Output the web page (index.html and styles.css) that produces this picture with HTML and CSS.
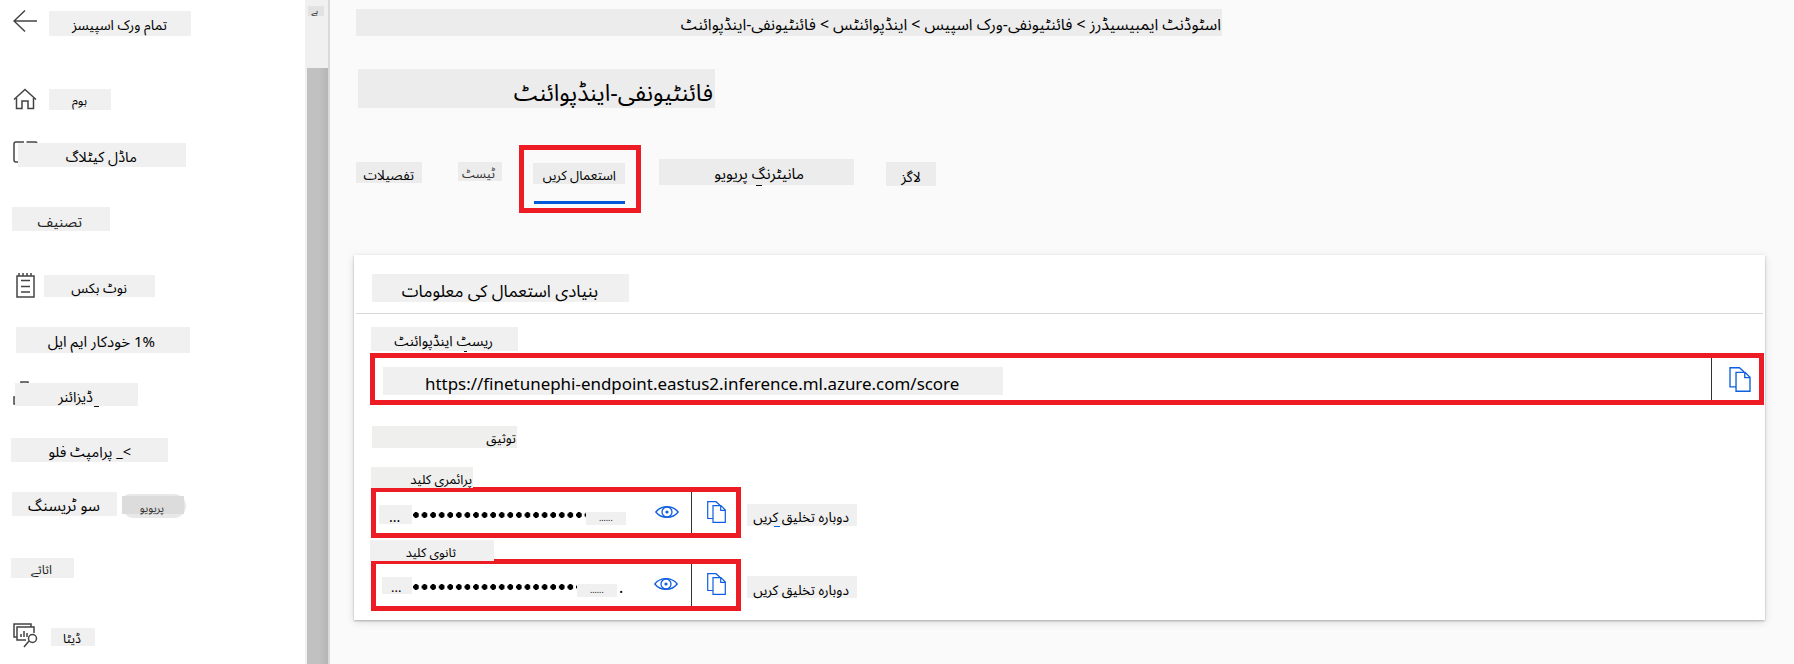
FILE: index.html
```
<!DOCTYPE html>
<html lang="ur">
<head>
<meta charset="utf-8">
<title>فائنٹیونفی-اینڈپوائنٹ</title>
<link rel="stylesheet" href="styles.css">
</head>
<body>
<svg width="0" height="0" class="defs" aria-hidden="true">
  <symbol id="copy" viewBox="0 0 19 22"><path d="M5.500 17.500H.7V.7h8.300l4 3.500M6 4.700h8l4.300 4.300v12.300H6zM13.700 4.700v4.600h4.600" fill="none" stroke="#0f5fe0" stroke-width="1.200"/></symbol>
  <symbol id="eye" viewBox="0 0 24 12"><path d="M.8 6Q5 .7 12 .7T23.200 6Q19 11.300 12 11.300T.8 6z" fill="none" stroke="#0f5fe0" stroke-width="1.300"/><circle cx="12" cy="6" r="5" fill="none" stroke="#0f5fe0" stroke-width="1.300"/><circle cx="12" cy="6" r="1.600" fill="#0f5fe0"/></symbol>
</svg>
<div class="app">
  <nav class="sidebar">
    <div class="item all"><svg class="icon" width="25" height="24" viewBox="0 0 25 24"><path d="M24 12H1M12 1.500L1 12l11 10.500"/></svg><span class="chip"><span>تمام ورک اسپیسز</span></span></div>
    <div class="item home"><svg class="icon" width="24" height="22" viewBox="0 0 24 22"><path d="M1 11.500L12 1.500 23 11.500M3.500 10v10.500h5.500v-7.500h6v7.500H20.500V10"/></svg><span class="chip"><span>ہوم</span></span></div>
    <div class="item models"><svg class="icon" width="26" height="22" viewBox="0 0 26 22"><path d="M11 1H3Q1 1 1 3v16q0 2 2 2h3M13.500 1H22q1.500 0 2 1"/></svg><span class="chip"><span>ماڈل کیٹلاگ</span></span></div>
    <div class="item authoring"><span class="chip"><span>تصنیف</span></span></div>
    <div class="item notebooks"><svg class="icon" width="19" height="25" viewBox="0 0 19 25"><path d="M1 3h17v21H1zM3 0v3M7 0v3M11 0v3M15 0v3M5 7.500h9M5 13.500h9M5 19h9"/></svg><span class="chip"><span>نوٹ بکس</span></span></div>
    <div class="item automl"><span class="chip"><span>1% خودکار ایم ایل</span></span></div>
    <div class="item designer"><svg class="icon" width="16" height="24" viewBox="0 0 16 24"><path d="M8 4V1h7v3M3 16H1v7h2"/></svg><span class="chip mark"><span>ڈیزائنر</span></span></div>
    <div class="item prompt"><span class="chip"><span>&gt;_ پرامپٹ فلو</span></span></div>
    <div class="item tracing"><span class="chip"><span>سو ٹریسنگ</span></span><span class="badge"><span class="chip"><span>پریویو</span></span></span></div>
    <div class="item assets"><span class="chip"><span>اثاثے</span></span></div>
    <div class="item data"><svg class="icon" width="25" height="25" viewBox="0 0 25 25"><path d="M4 14H1V1h17v3M13 17H4V4h17v6M8 14v-3M11 14V8M14 14v-4M16 18l-5 6"/><circle cx="19.500" cy="15.500" r="4"/></svg><span class="chip"><span>ڈیٹا</span></span></div>
  </nav>
  <div class="scroll"><span class="chip"><span>ہے</span></span><div class="thumb"></div></div>
  <main class="main">
    <div class="crumbs chip"><span>اسٹوڈنٹ ایمبیسیڈرز &gt; فائنٹیونفی-ورک اسپیس &gt; اینڈپوائنٹس &gt; فائنٹیونفی-اینڈپوائنٹ</span></div>
    <h1 class="title chip"><span>فائنٹیونفی-اینڈپوائنٹ</span></h1>
    <div class="tabs">
      <span class="chip details"><span>تفصیلات</span></span>
      <span class="chip test"><span>ٹیسٹ</span></span>
      <div class="active"><span class="chip"><span>استعمال کریں</span></span><div class="line"></div></div>
      <span class="chip monitoring mark"><span>مانیٹرنگ پریویو</span></span>
      <span class="chip logs"><span>لاگز</span></span>
    </div>
    <section class="card">
      <header><h2 class="chip"><span>بنیادی استعمال کی معلومات</span></h2></header>
      <div class="chip rest mark"><span>ریسٹ اینڈپوائنٹ</span></div>
      <div class="box url"><span class="chip"><span>https://finetunephi-endpoint.eastus2.inference.ml.azure.com/score</span></span><span class="copy"><svg width="22" height="25"><use href="#copy"/></svg></span></div>
      <div class="chip auth"><span>توثیق</span></div>
      <div class="chip primary"><span>پرائمری کلید</span></div>
      <div class="row first">
        <div class="box key"><span class="chip lead"><span>...</span></span><span class="dots"></span><span class="chip tail"><span>......</span></span><svg class="eye" width="24" height="12"><use href="#eye"/></svg><span class="copy"><svg width="19" height="22"><use href="#copy"/></svg></span></div>
        <span class="chip regen mark"><span>دوبارہ تخلیق کریں</span></span>
      </div>
      <div class="chip secondary"><span>ثانوی کلید</span></div>
      <div class="row second">
        <div class="box key"><span class="chip lead"><span>...</span></span><span class="dots"></span><span class="chip tail"><span>......</span></span><span class="stop">.</span><svg class="eye" width="24" height="12"><use href="#eye"/></svg><span class="copy"><svg width="19" height="22"><use href="#copy"/></svg></span></div>
        <span class="chip regen"><span>دوبارہ تخلیق کریں</span></span>
      </div>
    </section>
  </main>
</div>
</body>
</html>
```
FILE: styles.css
```
* { box-sizing: border-box; }
body { margin: 0; font-family: "Noto Sans", "Noto Sans Arabic", "DejaVu Sans", sans-serif; color: #000; background: #fafafa; }
h1, h2 { margin: 0; font-weight: 400; }
.defs { display: block; }
.app { display: flex; width: 1794px; height: 664px; overflow: hidden; }
.chip { display: flex; flex: none; direction: rtl; align-items: center; background: #f0f0f0; white-space: nowrap; line-height: 1; font-size: 14px; padding-top: 4px; }
.mark { position: relative; }
.mark::after { content: ""; position: absolute; left: var(--mark-x); top: 100%; width: var(--mark-w, 5px); height: 1px; background: var(--mark-color, #111); }
.icon { flex: none; fill: none; stroke: #444; stroke-width: 1.5; }
.sidebar { width: 305px; height: 664px; background: #fff; overflow: hidden; flex: none; }
.item { display: flex; align-items: flex-start; }
.all { padding: 9px 0 0 13px; height: 88px; gap: 11px; }
.all .chip { width: 142px; height: 25px; margin-top: 2px; padding-right: 24px; padding-top: 2px; font-size: 13.9px; }
.home { padding-left: 13px; height: 53px; gap: 12px; }
.home .chip { width: 62px; height: 21px; margin-top: 1px; padding-right: 24px; font-size: 12.3px; padding-top: 3px; }
.models { padding-left: 13px; height: 66px; }
.models .chip { width: 168px; height: 24px; margin: 2px 0 0 -21px; padding-right: 49px; padding-top: 3px; z-index: 1; font-size: 14.6px; }
.authoring { padding-left: 12px; height: 66px; }
.authoring .chip { width: 98px; height: 24px; padding-right: 28px; font-size: 14.5px; color: #222; }
.notebooks { padding-left: 16px; height: 54px; gap: 9px; }
.notebooks .chip { width: 111px; height: 22px; margin-top: 2px; padding-right: 28px; font-size: 13.8px; }
.automl { padding-left: 16px; height: 54px; }
.automl .chip { width: 174px; height: 26px; padding-right: 35px; padding-top: 3px; font-size: 15px; }
.designer { padding-left: 13px; height: 57px; }
.designer .chip { width: 123px; height: 23px; margin: 2px 0 0 -14px; padding-right: 45px; z-index: 1; font-size: 14.5px; --mark-x: 79px; }
.prompt { padding-left: 11px; height: 54px; }
.prompt .chip { width: 157px; height: 24px; padding-right: 37px; padding-top: 3px; font-size: 14.6px; }
.tracing { padding-left: 12px; height: 66px; gap: 5px; }
.tracing > .chip { width: 105px; height: 24px; padding-right: 17px; font-size: 15.5px; }
.badge { width: 64px; height: 24px; margin-top: 2px; padding-top: 2px; background: #e8e8e8; border-radius: 8px 12px 12px 12px; }
.badge .chip { width: 62px; height: 18px; background: #dcdcdc; padding-right: 20px; font-size: 11px; color: #333; }
.assets { padding-left: 11px; height: 65px; }
.assets .chip { width: 63px; height: 20px; padding-right: 22px; font-size: 12.5px; color: #222; }
.data { padding-left: 13px; gap: 13px; }
.data .chip { width: 44px; height: 18px; margin-top: 5px; padding-right: 14px; padding-top: 5px; font-size: 12.5px; }
.scroll { width: 25px; height: 664px; flex: none; background: #f0f0f0; border-right: 2px solid #d9d9d9; padding: 6px 0 0 2px; }
.scroll .chip { width: 16px; height: 10px; background: #e2e2e2; margin-left: 1px; padding: 0 6px 0 0; font-size: 8px; overflow: hidden; }
.thumb { width: 21px; height: 596px; margin-top: 52px; background: linear-gradient(90deg, #c1c1c1 60%, #b5b5b5); }
.main { width: 1464px; padding: 9px 0 0 24px; }
.main > .chip, .tabs .chip { background: #ececec; }
.main > .crumbs { width: 866px; height: 27px; margin-left: 2px; padding-right: 1px; font-size: 15.85px; }
.main > .title { width: 357px; height: 39px; margin: 33px 0 0 4px; padding-right: 2px; padding-top: 8px; font-size: 23.4px; }
.tabs { display: flex; align-items: flex-start; height: 110px; margin-top: 37px; padding-left: 2px; }
.tabs .details { width: 66px; height: 21px; margin-top: 17px; padding-right: 8px; font-size: 13.6px; }
.tabs .test { width: 44px; height: 19px; margin: 17px 0 0 36px; padding-right: 7px; padding-top: 5px; font-size: 12.6px; color: #333; }
.active { width: 122px; height: 68px; margin-left: 17px; border: 5px solid #ed1c24; padding: 13px 0 0 9px; }
.active .chip { width: 92px; height: 21px; padding-right: 9px; padding-top: 5px; font-size: 13.2px; }
.line { width: 91px; height: 3px; margin: 17px 0 0 1px; background: #0058d8; }
.tabs .monitoring { width: 195px; height: 26px; margin: 14px 0 0 18px; padding-right: 50px; font-size: 15.2px; --mark-x: 97px; --mark-w: 6px; }
.tabs .logs { width: 50px; height: 24px; margin: 17px 0 0 32px; padding-right: 15px; padding-top: 6px; font-size: 14.3px; }
.card { width: 1411px; height: 365px; background: #fff; box-shadow: 0 1px 2px rgba(0,0,0,.25), 0 2px 8px rgba(0,0,0,.13); }
.card header { height: 59px; margin: 0 2px; border-bottom: 1px solid #d8d8d8; padding: 19px 0 0 16px; }
.card h2 { width: 257px; height: 28px; padding-right: 31px; font-size: 17px; }
.rest { width: 147px; height: 24px; margin: 13px 0 2px 17px; padding-right: 25px; font-size: 14.2px; --mark-x: 93px; --mark-w: 3px; }
.box { display: flex; border: 5px solid #ed1c24; flex: none; align-items: flex-start; }
.url { width: 1394px; height: 52px; margin-left: 16px; padding-left: 8px; }
.url .chip { width: 620px; height: 28px; margin-top: 9px; direction: ltr; padding-left: 42px; padding-top: 6px; font-size: 16.95px; }
.copy { display: flex; align-items: center; justify-content: center; align-self: stretch; margin-left: auto; border-left: 1px solid #333; width: 48px; padding-left: 7px; }
.url .copy { padding-left: 8px; }
.auth { width: 145px; height: 22px; margin: 21px 0 0 18px; padding-right: 1px; background: #efefed; font-size: 13.2px; }
.primary { width: 102px; height: 21px; margin: 19px 0 -1px 17px; padding-right: 1px; background: #efefed; position: relative; z-index: 1; font-size: 12.9px; }
.row { display: flex; align-items: flex-start; padding-left: 17px; gap: 6px; }
.first { height: 53px; }
.key { width: 370px; height: 51px; padding-left: 3px; }
.second .key { height: 52px; }
.key .copy { width: 45px; padding-left: 5px; padding-bottom: 1px; }
.second .copy { padding-bottom: 3px; }
.key .lead { width: 33px; height: 19px; margin-top: 13px; direction: ltr; padding-left: 10px; }
.second .key .lead { width: 30px; height: 17px; margin-left: 3px; padding-left: 9px; font-size: 13px; }
.dots { width: 173px; height: 6px; margin: 20px 0 0 1px; background: radial-gradient(circle at 3px 3px, #000 2.6px, transparent 3.1px) 0 0 / 8.58px 6px repeat-x; }
.key .tail { width: 40px; height: 13px; margin-top: 20px; direction: ltr; padding: 0 0 0 13px; font-size: 8.5px; }
.eye { margin: 14px 0 0 29px; }
.regen { width: 110px; height: 22px; margin-top: 17px; padding-right: 8px; font-size: 13.75px; --mark-x: 27px; --mark-w: 6px; --mark-color: #0f5fe0; }
.second .regen { padding-top: 5px; }
.secondary { width: 124px; height: 21px; margin: 0 0 -2px 16px; padding-right: 38px; position: relative; z-index: 1; font-size: 12.7px; }
.second .dots { width: 164px; }
.stop { width: 4px; margin: 15px 0 0 2px; line-height: 1; }
.second .eye { margin-left: 31px; }
```
